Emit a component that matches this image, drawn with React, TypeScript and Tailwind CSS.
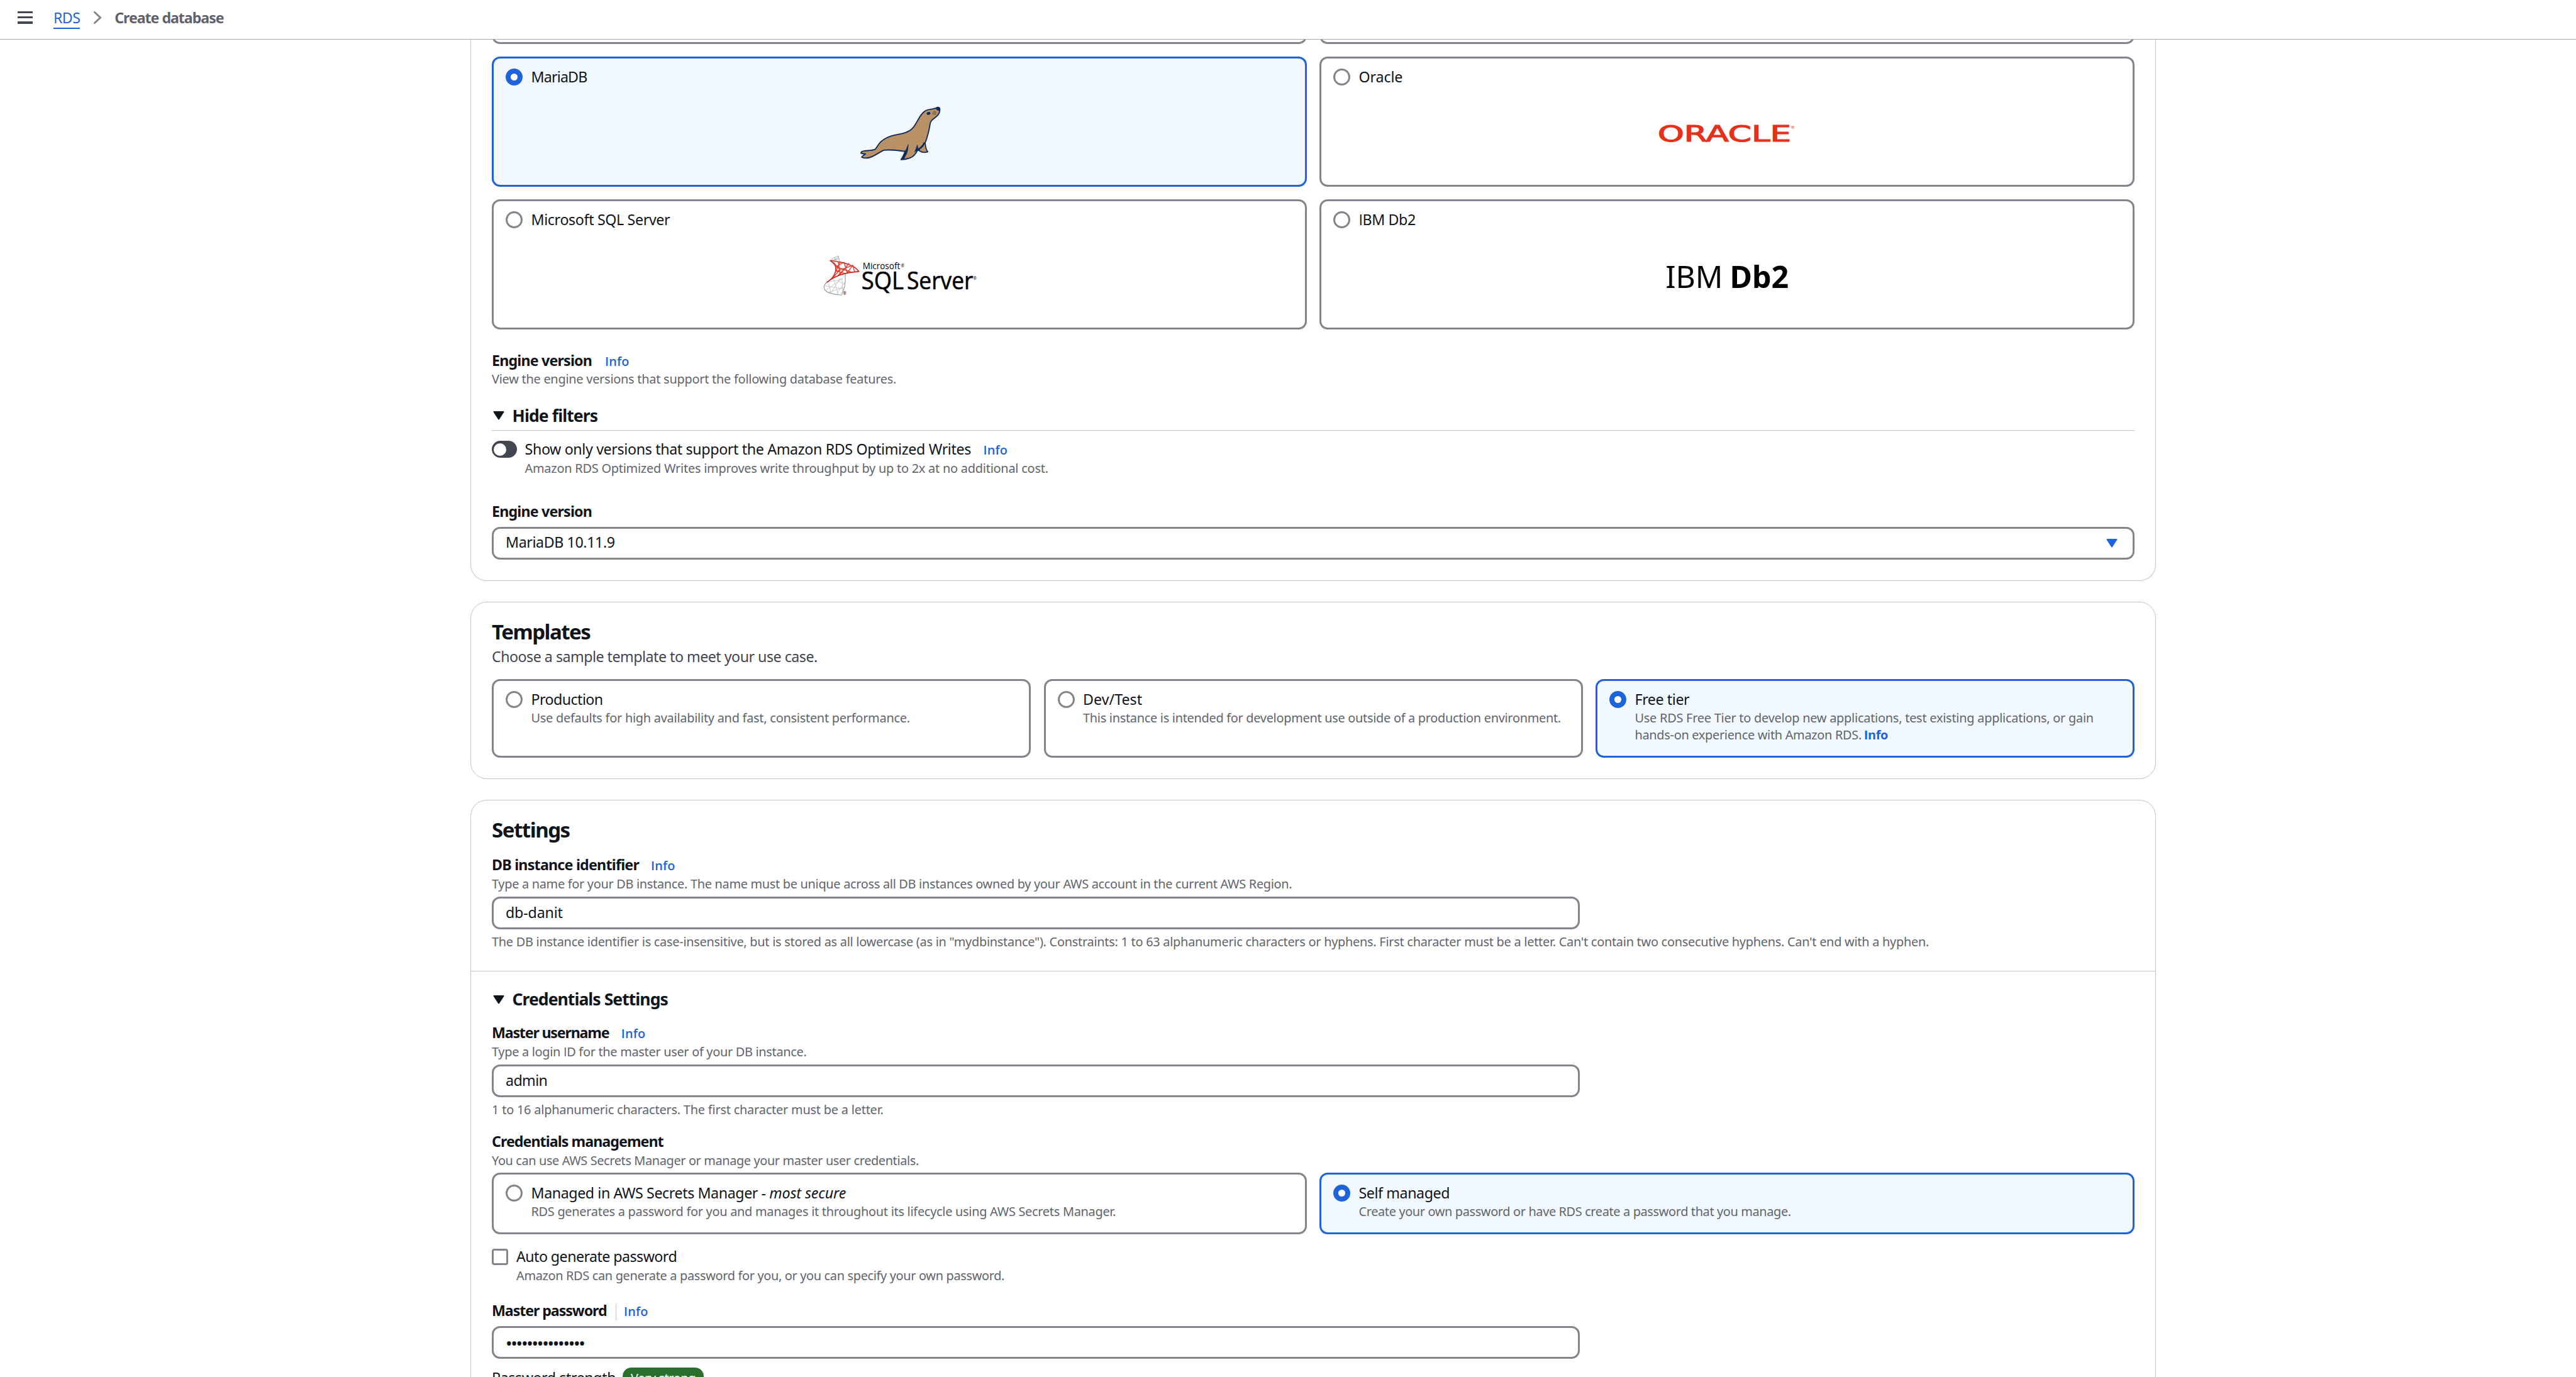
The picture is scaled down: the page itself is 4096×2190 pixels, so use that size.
import React from "react";

const BODY = "text-[23.2px] leading-[33px] text-[#0f141a] tracking-[-0.4px]";
const LABEL = "text-[23.2px] leading-[33px] font-bold text-[#0f141a]";
const SMALL = "text-[19.9px] leading-[26px] text-[#61646d]";

const Info = () => (
  <a className="font-['Open_Sans',sans-serif] text-[19.9px] font-semibold leading-[20px] tracking-[0.1px] text-[#1f63da]">Info</a>
);

/** Capital I drawn from a face whose I has no serifs. */
const PlainI = () => <span className="font-['Open_Sans',sans-serif] leading-none">I</span>;

function Radio({ on }: { on?: boolean }) {
  return on ? (
    <span className="mt-[3px] flex size-[27px] shrink-0 items-center justify-center rounded-full bg-[#1f63da]">
      <span className="size-[11px] rounded-full bg-white" />
    </span>
  ) : (
    <span className="mt-[3px] size-[27px] shrink-0 rounded-full border-3 border-[#85848d] bg-white" />
  );
}

type TileProps = {
  on?: boolean;
  className?: string;
  title?: React.ReactNode;
  desc?: React.ReactNode;
  children?: React.ReactNode;
};

function Tile({ on, className = "", title, desc, children }: TileProps) {
  return (
    <div
      className={`flex flex-col rounded-[13px] border-3 px-[19px] pt-[13px] ${
        on ? "border-[#1f63da] bg-[#f1f9ff]" : "border-[#85848d] bg-white"
      } ${className}`}
    >
      <div className="flex gap-[13.5px]">
        <Radio on={on} />
        <div className="flex flex-col whitespace-nowrap">
          <div className={BODY + " h-[33px]"}>{title}</div>
          {desc}
        </div>
      </div>
      {children}
    </div>
  );
}

function Caret({ className }: { className: string }) {
  return (
    <svg className={className} viewBox="0 0 18 14">
      <path d="M1.5 1 L16.5 1 L9 12.5 Z" fill="currentColor" stroke="currentColor" strokeWidth="2" strokeLinejoin="round" />
    </svg>
  );
}

function SeaLion() {
  return (
    <svg className="mt-[8px] h-[128.7px] w-[312.5px] self-center" viewBox="17 0 1020 420">
      <path
        d="M718 80 C728 75 738 78 736 92 C736 106 727 120 711 131 C699 139 690 147 687 158 C682 190 675 225 660 262 C662 285 666 300 674 308 C660 313 645 312 634 305 L622 298 C612 318 600 334 580 341 C565 346 550 349 535 349 C546 335 553 320 558 306 C520 302 480 295 445 300 C420 312 400 328 375 337 C358 342 340 341 331 336 C333 328 346 326 350 319 C342 317 333 320 327 315 C326 309 332 305 345 303 C365 301 385 302 400 296 C410 285 415 272 428 258 C450 238 480 226 505 221 C540 214 575 208 595 186 C620 158 632 110 665 93 C685 85 705 88 718 80 Z"
        fill="#b89265"
        stroke="#10295c"
        strokeWidth="6"
        strokeLinejoin="round"
      />
      <path d="M575 266 C566 276 566 292 554 305 L534 350 L550 347 C556 336 564 322 569 308 C573 294 572 280 575 266 Z" fill="#10295c" />
      <path d="M620 270 C614 280 614 290 608 300 L604 312 L622 299 L634 304 L632 296 C645 288 655 278 660 262 L653 258 C646 274 636 285 623 291 C624 284 622 276 620 270 Z" fill="#10295c" />
      <path d="M716 81 C726 73 741 75 737 92 C728 98 718 94 716 81 Z" fill="#10295c" />
      <ellipse cx="678" cy="109" rx="10" ry="7" transform="rotate(-15 678 109)" fill="#10295c" />
      <path d="M708 94 L696 112 M711 96 L700 117 M714 98 L707 119 M717 100 L713 118" stroke="#5d5548" strokeWidth="2.5" fill="none" />
    </svg>
  );
}

function SqlServer() {
  return (
    <svg className="mt-[20px] h-[101px] w-[294px] self-center" viewBox="-13 0 960 330">
      <g fill="none" strokeLinecap="round" strokeLinejoin="round">
        <path d="M108 93 C118 80 135 73 150 70 L158 100 M108 93 L152 84 M130 77 L140 97 M152 72 L128 95" stroke="#a3a7ad" strokeWidth="3" />
        <path d="M92 205 C76 215 70 236 84 250 C100 264 135 270 166 272 C182 245 189 205 186 163" stroke="#9aa0a6" strokeWidth="4" />
        <path d="M92 205 L170 190 M100 212 L112 262 M84 248 L150 200 M84 225 L178 240 M112 262 L160 185 M128 195 L150 269 M140 268 L184 205 M170 190 L172 255 M100 258 L180 232 M186 170 L150 200 L183 215" stroke="#c3c6ca" strokeWidth="3" />
        <path d="M108 93 C175 100 235 115 257 150 C200 153 140 165 92 205 C128 180 140 150 136 125 C133 110 120 103 108 93 Z" stroke="#c4281f" strokeWidth="5.5" />
        <path d="M136 125 L180 102 L196 157 L225 117 L234 149 M136 125 L215 152 M150 99 L160 164 L205 108 M160 99 L138 148 L180 158 M122 187 L136 150 L184 133 L225 117 M125 102 L158 140 L120 185 M184 133 L150 168" stroke="#e23b2c" strokeWidth="4.5" />
      </g>
      <g fontFamily="'Open Sans','Noto Sans',sans-serif" fill="#000">
        <text x="277" y="138" fontSize="45" textLength="194" lengthAdjust="spacingAndGlyphs">Microsoft</text>
        <text x="474" y="128" fontSize="23">®</text>
        <text x="270" y="243" fontSize="127" stroke="#000" strokeWidth="2" textLength="220" lengthAdjust="spacingAndGlyphs">SQL</text>
        <text x="506" y="243" fontSize="127" stroke="#000" strokeWidth="2" textLength="345" lengthAdjust="spacingAndGlyphs">Server</text>
        <text x="850" y="192" fontSize="22">®</text>
        <text x="174" y="272" fontSize="22">®</text>
      </g>
    </svg>
  );
}

function Oracle() {
  return (
    <svg className="mt-[45px] h-[55px] w-[312.5px] self-center" viewBox="-8 60 1020 180">
      <g fontFamily="'DejaVu Sans',sans-serif" fill="#e5301a">
        <text x="141" y="195.5" fontSize="116" stroke="#e5301a" strokeWidth="4" textLength="694" lengthAdjust="spacingAndGlyphs">ORACLE</text>
        <text x="832" y="129" fontSize="24">®</text>
      </g>
    </svg>
  );
}

function Db2() {
  return (
    <svg className="mt-[38px] h-[73.5px] w-[312.5px] self-center" viewBox="-8 780 1020 240">
      <g fontFamily="'Noto Sans',sans-serif" fill="#000">
        <text x="182" y="956" fontSize="158" textLength="298" lengthAdjust="spacingAndGlyphs">IBM</text>
        <text x="516" y="956" fontSize="158" fontWeight="700" textLength="306" lengthAdjust="spacingAndGlyphs">Db2</text>
      </g>
    </svg>
  );
}

const Card = ({ className = "", children }: { className?: string; children: React.ReactNode }) => (
  <section className={"ml-[748px] flex w-[2680px] shrink-0 flex-col whitespace-nowrap border border-[#c3c4cc] px-[33px] " + className}>
    {children}
  </section>
);

const Field = ({ className, children }: { className: string; children: React.ReactNode }) => (
  <div className={"flex h-[52.5px] items-center rounded-[13px] border-3 border-[#85848d] bg-white px-[19px] text-[23.2px] text-[#0f141a] " + className}>
    {children}
  </div>
);

export default function App() {
  return (
    <div className="flex h-[2190px] w-[4096px] flex-col overflow-hidden bg-white font-['Noto_Sans',sans-serif]">
      <header className="flex h-[63px] shrink-0 items-center whitespace-nowrap border-b border-[#a9abb3] pl-[28px]">
        <div className="mb-[7px] flex h-[20px] w-[23.5px] flex-col justify-between">
          <span className="h-[3.5px] bg-[#424650]" />
          <span className="h-[3.5px] bg-[#424650]" />
          <span className="h-[3.5px] bg-[#424650]" />
        </div>
        <a className="mb-[5px] ml-[33.5px] border-b-2 border-[#1f63da] text-[23.2px] leading-[32px] tracking-[-0.6px] text-[#1f63da]">RDS</a>
        <svg className="mb-[7px] ml-[21px] h-[22px] w-[14px]" viewBox="0 0 14 22">
          <path d="M1.5 1.5 L11.5 11 L1.5 20.5" fill="none" stroke="#85848d" strokeWidth="3" />
        </svg>
        <span className="mb-[6px] ml-[20px] text-[23.2px] font-bold tracking-[-1.05px] text-[#5f626b]">Create database</span>
      </header>

      <main className="flex h-[2127px] shrink-0 flex-col overflow-hidden">
        <Card className="rounded-b-[26px] border-t-0 pb-[33px]">
          <div className="-mt-[200px] grid shrink-0 grid-cols-2 gap-[20px]">
            <Tile className="h-[207px]" />
            <Tile className="h-[207px]" />
            <Tile on className="h-[207px]" title={<span className="tracking-[-0.8px]">MariaDB</span>}>
              <SeaLion />
            </Tile>
            <Tile className="h-[207px]" title={<span className="tracking-[-0.1px]">Oracle</span>}>
              <Oracle />
            </Tile>
            <Tile className="h-[207px]" title={<span className="tracking-[-0.34px]">Microsoft SQL Server</span>}>
              <SqlServer />
            </Tile>
            <Tile className="h-[207px]" title={<><PlainI />BM Db2</>}>
              <Db2 />
            </Tile>
          </div>

          <div className="mt-[33px] flex h-[33px] items-baseline gap-[21px]">
            <span className={LABEL + " tracking-[-0.8px]"}>Engine version</span>
            <Info />
          </div>
          <div className={SMALL + " tracking-[-0.24px]"}>View the engine versions that support the following database features.</div>
          <div className="mt-[29px] flex border-b border-[#c3c4cc] pb-[6px] text-[26.5px] font-bold leading-[33px] tracking-[-0.88px] text-[#0f141a]">
            <Caret className="ml-[1.5px] mr-[13px] mt-[9px] h-[14px] w-[18px]" />
            Hide filters
          </div>
          <div className="mt-[13px] flex gap-[13px]">
            <span className="mt-[3px] flex h-[27px] w-[39.5px] items-center rounded-full bg-[#424650] pl-[3px]">
              <span className="size-[20px] rounded-full bg-white" />
            </span>
            <div className="flex flex-col">
              <div className="flex h-[33px] items-baseline gap-[19.5px]">
                <span className="text-[23.2px] leading-[33px] tracking-[-0.34px] text-[#0f141a]">Show only versions that support the Amazon RDS Optimized Writes</span>
                <Info />
              </div>
              <div className={SMALL + " mt-px tracking-[-0.22px]"}>Amazon RDS Optimized Writes improves write throughput by up to 2x at no additional cost.</div>
            </div>
          </div>
          <div className={LABEL + " mt-[38.5px] tracking-[-0.8px]"}>Engine version</div>
          <Field className="mt-[8px] justify-between pb-[2px] tracking-[-0.38px]">
            MariaDB 10.11.9
            <Caret className="mr-[5px] mt-[2px] h-[14px] w-[18px] text-[#1f63da]" />
          </Field>
        </Card>

        <Card className="mt-[33px] rounded-[26px] pb-[33px] pt-[27px]">
          <h2 className="text-[33px] font-bold leading-[40px] tracking-[-1.48px] text-[#0f141a]">Templates</h2>
          <div className="mt-[2.5px] text-[23.2px] leading-[33px] tracking-[-0.49px] text-[#424650]">Choose a sample template to meet your use case.</div>
          <div className="mt-[19.5px] grid grid-cols-3 gap-[20.5px]">
            <Tile
              className="h-[125px]"
              title={<span className="tracking-[-0.55px]">Production</span>}
              desc={<div className={SMALL + " tracking-[-0.24px]"}>Use defaults for high availability and fast, consistent performance.</div>}
            />
            <Tile
              className="h-[125px]"
              title={<span className="tracking-[0.05px]">Dev/Test</span>}
              desc={<div className={SMALL + " tracking-[-0.28px]"}>This instance is intended for development use outside of a production environment.</div>}
            />
            <Tile
              on
              className="h-[125px]"
              title="Free tier"
              desc={
                <div className="text-[19.9px] leading-[26.8px] tracking-[-0.23px] text-[#61646d]">
                  <div>Use RDS Free Tier to develop new applications, test existing applications, or gain</div>
                  <div className="tracking-[-0.29px]">
                    hands-on experience with Amazon RDS.{" "}
                    <a className="-ml-px font-['Open_Sans',sans-serif] font-bold leading-none tracking-[-0.4px] text-[#1f63da]">Info</a>
                  </div>
                </div>
              }
            />
          </div>
        </Card>

        <Card className="mt-[33px] h-[1200px] rounded-t-[26px] pt-[27px]">
          <h2 className="text-[33px] font-bold leading-[40px] tracking-[-1.45px] text-[#0f141a]">Settings</h2>
          <div className="mt-[19px] flex h-[33px] items-baseline gap-[19px]">
            <span className={LABEL + " tracking-[-0.75px]"}>DB instance identifier</span>
            <Info />
          </div>
          <div className={SMALL + " mt-px tracking-[-0.29px]"}>
            Type a name for your DB instance. The name must be unique across all DB instances owned by your AWS account in the current AWS Region.
          </div>
          <Field className="mt-[6.5px] w-[1730px] tracking-[-0.15px]">db-danit</Field>
          <div className={SMALL + " mt-[7px] tracking-[-0.255px]"}>
            The DB instance identifier is case-insensitive, but is stored as all lowercase (as in "mydbinstance"). Constraints: 1 to 63 alphanumeric characters or hyphens. First character must be a letter. Can't contain two consecutive hyphens. Can't end with a hyphen.
          </div>
          <div className="-mx-[33px] mt-[33px] h-px shrink-0 bg-[#c3c4cc]" />

          <div className="mt-[28px] flex text-[26.5px] font-bold leading-[33px] tracking-[-0.93px] text-[#0f141a]">
            <Caret className="ml-[1.5px] mr-[13px] mt-[9.5px] h-[14px] w-[18px]" />
            Credentials Settings
          </div>
          <div className="mt-[20px] flex h-[33px] items-baseline gap-[19.5px]">
            <span className={LABEL + " tracking-[-1.18px]"}>Master username</span>
            <Info />
          </div>
          <div className={SMALL + " mt-[0.5px] h-[26px] tracking-[-0.29px]"}>
            Type a login <PlainI />D for the master user of your DB instance.
          </div>
          <Field className="mt-[7px] w-[1730px] tracking-[-0.6px]">admin</Field>
          <div className={SMALL + " mt-[7px] tracking-[-0.2px]"}>1 to 16 alphanumeric characters. The first character must be a letter.</div>
          <div className={LABEL + " mt-[20.5px] tracking-[-0.93px]"}>Credentials management</div>
          <div className={SMALL + " mt-px tracking-[-0.37px]"}>You can use AWS Secrets Manager or manage your master user credentials.</div>
          <div className="mt-[6.5px] grid grid-cols-2 gap-[20px]">
            <Tile
              className="h-[97.5px]"
              title={<>Managed in AWS Secrets Manager - <i className="tracking-[-0.1px]">most secure</i></>}
              desc={<div className={SMALL + " tracking-[-0.27px]"}>RDS generates a password for you and manages it throughout its lifecycle using AWS Secrets Manager.</div>}
            />
            <Tile
              on
              className="h-[97.5px]"
              title="Self managed"
              desc={<div className={SMALL + " tracking-[-0.35px]"}>Create your own password or have RDS create a password that you manage.</div>}
            />
          </div>
          <div className="mt-[19.5px] flex gap-[13px]">
            <span className="mt-[4px] size-[26px] rounded-[4px] border-3 border-[#85848d]" />
            <div>
              <div className="text-[23.2px] leading-[33px] tracking-[-0.54px] text-[#0f141a]">Auto generate password</div>
              <div className={SMALL + " mt-px tracking-[-0.32px]"}>Amazon RDS can generate a password for you, or you can specify your own password.</div>
            </div>
          </div>
          <div className="mt-[26px] flex h-[33px] items-baseline">
            <span className={LABEL + " tracking-[-1.06px]"}>Master password</span>
            <span className="ml-[14px] mr-[12.5px] mt-[6px] h-[26px] w-px self-start bg-[#c3c4cc]" />
            <Info />
          </div>
          <Field className="mt-[7.5px] w-[1730px]">
            <span className="mt-[3px] text-[28px] leading-[40px] tracking-[-2.22px]">•••••••••••••••</span>
          </Field>
          <div className="mt-[14px] flex gap-[11px]">
            <span className={BODY}>Password strength</span>
            <span className="h-[33px] rounded-[14px] bg-[#29702c] px-[13px] text-[19.9px] leading-[33px] tracking-[-0.4px] text-white">Very strong</span>
          </div>
        </Card>
      </main>
    </div>
  );
}
